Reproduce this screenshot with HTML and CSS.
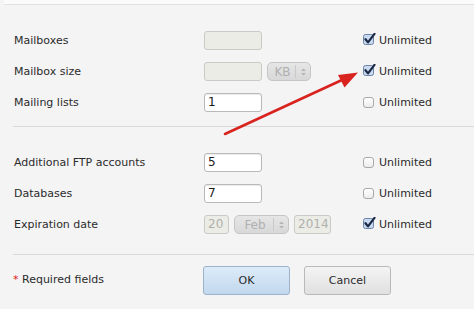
FILE: index.html
```html
<!DOCTYPE html>
<html>
<head>
<meta charset="utf-8">
<link rel="stylesheet" href="styles.css">
</head>
<body>
<div class="page">
  <div class="topband"></div>
  <div class="section s1">
    <div class="row">
      <div class="label">Mailboxes</div>
      <div class="ctrl"><span class="input disabled w58"></span></div>
      <label class="unl"><span class="cb checked"><svg width="13" height="13" viewBox="0 0 13 13"><rect x="0.5" y="1.5" width="10" height="10" rx="2" fill="#c9daf0" stroke="#6d84a8"/><path d="M2.5 6.2 L5 9.4 L11.5 0.8" fill="none" stroke="#1b2a44" stroke-width="2.2" stroke-linecap="round" stroke-linejoin="round"/></svg></span><span>Unlimited</span></label>
    </div>
    <div class="row">
      <div class="label">Mailbox size</div>
      <div class="ctrl"><span class="input disabled w58"></span><span class="select disabled w44"><span class="sv">KB</span><span class="arrows"><svg width="7" height="10" viewBox="0 0 7 10"><path d="M1 4 L3.5 1.5 L6 4 Z M1 6 L3.5 8.5 L6 6 Z" fill="#b4b4b4"/></svg></span></span></div>
      <label class="unl"><span class="cb checked"><svg width="13" height="13" viewBox="0 0 13 13"><rect x="0.5" y="1.5" width="10" height="10" rx="2" fill="#c9daf0" stroke="#6d84a8"/><path d="M2.5 6.2 L5 9.4 L11.5 0.8" fill="none" stroke="#1b2a44" stroke-width="2.2" stroke-linecap="round" stroke-linejoin="round"/></svg></span><span>Unlimited</span></label>
    </div>
    <div class="row">
      <div class="label">Mailing lists</div>
      <div class="ctrl"><span class="input w58">1</span></div>
      <label class="unl"><span class="cb"></span><span>Unlimited</span></label>
    </div>
  </div>
  <div class="section s2">
    <div class="row">
      <div class="label">Additional FTP accounts</div>
      <div class="ctrl"><span class="input w58">5</span></div>
      <label class="unl"><span class="cb"></span><span>Unlimited</span></label>
    </div>
    <div class="row">
      <div class="label">Databases</div>
      <div class="ctrl"><span class="input w58">7</span></div>
      <label class="unl"><span class="cb"></span><span>Unlimited</span></label>
    </div>
    <div class="row">
      <div class="label">Expiration date</div>
      <div class="ctrl"><span class="input disabled w25">20</span><span class="select disabled w55"><span class="sv">Feb</span><span class="arrows"><svg width="7" height="10" viewBox="0 0 7 10"><path d="M1 4 L3.5 1.5 L6 4 Z M1 6 L3.5 8.5 L6 6 Z" fill="#b4b4b4"/></svg></span></span><span class="input disabled w37">2014</span></div>
      <label class="unl"><span class="cb checked"><svg width="13" height="13" viewBox="0 0 13 13"><rect x="0.5" y="1.5" width="10" height="10" rx="2" fill="#c9daf0" stroke="#6d84a8"/><path d="M2.5 6.2 L5 9.4 L11.5 0.8" fill="none" stroke="#1b2a44" stroke-width="2.2" stroke-linecap="round" stroke-linejoin="round"/></svg></span><span>Unlimited</span></label>
    </div>
  </div>
  <div class="footer">
    <div class="req"><span class="star">*</span> Required fields</div>
    <div class="buttons">
      <button class="btn ok">OK</button>
      <button class="btn cancel">Cancel</button>
    </div>
  </div>
  <svg class="arrow" width="474" height="309" viewBox="0 0 474 309">
    <line x1="225" y1="134" x2="343" y2="79.5" stroke="#d8231f" stroke-width="2.6" stroke-linecap="round"/>
    <polygon points="358,72.5 338,75 344.5,87.5" fill="#d8231f"/>
  </svg>
</div>
</body>
</html>
```

FILE: styles.css
```css
html, body {
  margin: 0;
  padding: 0;
}
body {
  background: #f4f4f4;
  font-family: "DejaVu Sans", Verdana, sans-serif;
  font-size: 11px;
  color: #2b2b2b;
}
.page {
  position: relative;
  width: 474px;
  height: 309px;
  overflow: hidden;
}
.topband {
  height: 4px;
  background: #fbfbfb;
  border-bottom: 1px solid #e2e2e2;
  margin-left: 4px;
}
.section {
  margin-left: 13px;
  border-bottom: 1px solid #d9d9d9;
}
.s1 {
  padding-top: 20px;
  padding-bottom: 8px;
}
.s2 {
  padding-top: 20px;
  padding-bottom: 14px;
}
.row {
  display: grid;
  grid-template-columns: 191px 159px auto;
  height: 31px;
  align-items: center;
}
.label {
  padding-left: 1px;
}
.ctrl {
  display: flex;
  align-items: center;
  gap: 5px;
}
.input {
  box-sizing: border-box;
  height: 19px;
  background: #fff;
  border: 1px solid #b9b9b9;
  border-radius: 3px;
  box-shadow: inset 0 1px 1px rgba(0,0,0,0.08);
  font-size: 12px;
  line-height: 17px;
  padding-left: 3px;
  color: #1a1a1a;
}
.input.disabled {
  background: #ecece7;
  border-color: #cacac6;
  color: #b0b0ac;
  box-shadow: none;
}
.w58 { width: 58px; }
.w25 { width: 25px; }
.w37 { width: 37px; }
.w44 { width: 44px; }
.w55 { width: 55px; }
.select {
  box-sizing: border-box;
  height: 19px;
  display: flex;
  align-items: center;
  border: 1px solid #c6c6c6;
  border-radius: 5px;
  background: linear-gradient(#e6e6e6, #d8d8d8);
  font-size: 12px;
  color: #b0b0b0;
}
.select .sv {
  flex: 1;
  text-align: center;
  padding-left: 2px;
}
.select .arrows {
  width: 14px;
  height: 13px;
  border-left: 1px solid #c9c9c9;
  display: flex;
  align-items: center;
  justify-content: center;
}
.select .arrows svg {
  display: block;
}
.unl {
  display: flex;
  align-items: center;
  gap: 5px;
  font-size: 11px;
}
.cb {
  width: 11px;
  height: 11px;
  box-sizing: border-box;
  border: 1px solid #a9a9a9;
  border-radius: 3px;
  background: linear-gradient(#ffffff, #ececec);
  position: relative;
}
.cb.checked {
  border: none;
  background: none;
}
.cb.checked svg {
  position: absolute;
  left: 0;
  top: -2px;
}
.footer {
  display: flex;
  align-items: center;
  height: 50px;
  padding-left: 13px;
}
.req {
  width: 190px;
  font-size: 11px;
  margin-top: -2px;
}
.star {
  color: #d22;
}
.buttons {
  display: flex;
  gap: 14px;
}
.btn {
  box-sizing: border-box;
  width: 87px;
  height: 29px;
  border-radius: 3px;
  font-family: "DejaVu Sans", Verdana, sans-serif;
  font-size: 11px;
  color: #2b2b2b;
  padding: 0;
  margin: 0;
}
.ok {
  border: 1px solid #9cb3c9;
  background: linear-gradient(#dcebf8, #c2d8ee);
}
.cancel {
  border: 1px solid #b9b9b9;
  background: linear-gradient(#f4f4f4, #e0e0e0);
}
.arrow {
  position: absolute;
  left: 0;
  top: 0;
  pointer-events: none;
}
```
